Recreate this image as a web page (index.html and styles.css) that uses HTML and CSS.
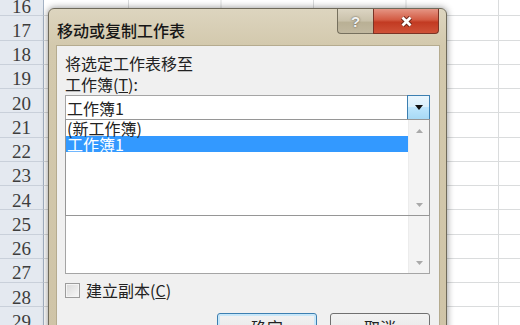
FILE: index.html
```html
<!DOCTYPE html>
<html lang="zh-CN">

<head>
    <meta charset="UTF-8">
    <meta name="viewport" content="width=device-width, initial-scale=1.0">
    <title>移动或复制工作表</title>
    <link rel="stylesheet" href="styles.css">
</head>

<body>
    <!-- 工作表背景 -->
    <div class="sheet">
        <div class="row"><div class="row-head">16</div><div class="cells"></div></div>
        <div class="row"><div class="row-head">17</div><div class="cells"></div></div>
        <div class="row"><div class="row-head">18</div><div class="cells"></div></div>
        <div class="row"><div class="row-head">19</div><div class="cells"></div></div>
        <div class="row"><div class="row-head">20</div><div class="cells"></div></div>
        <div class="row"><div class="row-head">21</div><div class="cells"></div></div>
        <div class="row"><div class="row-head">22</div><div class="cells"></div></div>
        <div class="row"><div class="row-head">23</div><div class="cells"></div></div>
        <div class="row"><div class="row-head">24</div><div class="cells"></div></div>
        <div class="row"><div class="row-head">25</div><div class="cells"></div></div>
        <div class="row"><div class="row-head">26</div><div class="cells"></div></div>
        <div class="row"><div class="row-head">27</div><div class="cells"></div></div>
        <div class="row"><div class="row-head">28</div><div class="cells"></div></div>
        <div class="row"><div class="row-head">29</div><div class="cells"></div></div>
    </div>

    <!-- 对话框 -->
    <div class="dialog">
        <div class="title-bar">
            <span class="title">移动或复制工作表</span>
            <div class="title-buttons">
                <span class="btn-help">?</span>
                <span class="btn-close">
                    <svg width="13" height="11" viewBox="0 0 13 11">
                        <path d="M2.5 1.5l8 8M10.5 1.5l-8 8" stroke="#6a2518" stroke-width="4.6" />
                        <path d="M2.5 1.5l8 8M10.5 1.5l-8 8" stroke="#fff" stroke-width="2.8" />
                    </svg>
                </span>
            </div>
        </div>

        <div class="client">
            <div class="label">将选定工作表移至</div>
            <div class="label">工作簿(<u>T</u>):</div>

            <div class="combo">
                <span class="combo-text">工作簿1</span>
                <span class="combo-arrow">
                    <svg width="8" height="5" viewBox="0 0 8 5"><path d="M0 0h8L4 5z" fill="#111" /></svg>
                </span>

                <!-- 下拉列表 -->
                <div class="dropdown">
                    <ul class="dropdown-items">
                        <li>(新工作簿)</li>
                        <li class="selected">工作簿1</li>
                    </ul>
                    <div class="scrollbar">
                        <span class="scroll-btn">
                            <svg width="7" height="4" viewBox="0 0 7 4"><path d="M0 4L3.5 0L7 4z" fill="#a9a9a9" /></svg>
                        </span>
                        <span class="scroll-btn">
                            <svg width="7" height="4" viewBox="0 0 7 4"><path d="M0 0L3.5 4L7 0z" fill="#a9a9a9" /></svg>
                        </span>
                    </div>
                </div>
            </div>

            <div class="listbox">
                <div class="listbox-items"></div>
                <div class="scrollbar">
                    <span class="scroll-btn">
                        <svg width="7" height="4" viewBox="0 0 7 4"><path d="M0 0L3.5 4L7 0z" fill="#a9a9a9" /></svg>
                    </span>
                </div>
            </div>

            <label class="check-row"><span class="checkbox"></span>建立副本(<u>C</u>)</label>

            <div class="buttons">
                <button class="btn default">确定</button>
                <button class="btn">取消</button>
            </div>
        </div>
    </div>
</body>

</html>
```

FILE: styles.css
```css
* {
    box-sizing: border-box;
}

body {
    margin: 0;
    width: 520px;
    height: 325px;
    overflow: hidden;
    position: relative;
    background-color: #fff;
    font-family: "Noto Sans CJK SC", "Liberation Sans", sans-serif;
}

/* 工作表 */
.sheet {
    margin-top: -8px;
}

.row {
    display: flex;
    height: 24.25px;
}

.row-head {
    flex: none;
    width: 44px;
    display: flex;
    justify-content: center;
    align-items: center;
    padding-top: 6px;
    background-color: #e4e9f0;
    border-right: 1px solid #a4b2c4;
    border-bottom: 1px solid #c9d0da;
    font-family: "Liberation Serif", serif;
    font-size: 19px;
    color: #3d3d3d;
}

.cells {
    flex: 1;
    border-bottom: 1px solid #dadcdd;
    background-image: linear-gradient(to right, #dadcdd 1px, transparent 1px);
    background-size: 92.5px 100%;
    background-position: 84px 0;
}

/* 对话框 */
.dialog {
    position: absolute;
    left: 48px;
    top: 8px;
    width: 399px;
    height: 340px;
    display: flex;
    flex-direction: column;
    border: 1px solid #6f6a5a;
    border-radius: 6px 6px 0 0;
    background: linear-gradient(#ddd5bf, #d3c9ad 36px, #cfc4a7);
    box-shadow: 0 0 7px rgba(0, 0, 0, 0.45);
}

.title-bar {
    flex: none;
    height: 36px;
    display: flex;
    justify-content: space-between;
    align-items: flex-start;
}

.title {
    padding: 11px 0 0 8px;
    font-size: 16px;
    font-weight: 500;
    line-height: 20px;
    color: #161616;
}

.title-buttons {
    display: flex;
    margin-right: 7px;
}

.btn-help,
.btn-close {
    height: 25px;
    display: flex;
    justify-content: center;
    align-items: center;
    border: 1px solid #76705e;
    border-top: none;
}

.btn-help {
    width: 36px;
    border-right: none;
    border-radius: 0 0 0 4px;
    background: linear-gradient(#dcd5c3, #c9c1aa 50%, #b9b095 55%, #c1b89f);
    font-family: "Liberation Sans", sans-serif;
    font-weight: bold;
    font-size: 15px;
    color: #f2f2f2;
    text-shadow: 0 0 2px #4f4a3e;
}

.btn-close {
    width: 66px;
    border-radius: 0 0 4px 0;
    border-color: #7a3426;
    background: linear-gradient(#e59584, #d35b43 45%, #c23a22 55%, #cf5238);
}

/* 客户区 */
.client {
    flex: 1;
    margin: 0 6px 0 7px;
    padding: 7px 9px 0 8px;
    display: flex;
    flex-direction: column;
    background-color: #f0f0f0;
    border: 1px solid #b5ab8f;
    border-bottom: none;
    font-size: 16px;
    color: #222;
}

.label {
    line-height: 21px;
}

.combo {
    position: relative;
    height: 25px;
    display: flex;
    justify-content: space-between;
    align-items: center;
    background-color: #fff;
    border: 1px solid #a5a5a5;
}

.combo-text {
    padding-left: 1px;
    line-height: 20px;
}

.combo-arrow {
    width: 23px;
    height: 25px;
    margin-right: -1px;
    display: flex;
    justify-content: center;
    align-items: center;
    border: 1px solid #3c7fb1;
    background: linear-gradient(#eaf6fd, #d9f0fc 50%, #bee6fd 50%, #a7d9f5);
}

.dropdown {
    position: absolute;
    top: 100%;
    left: -1px;
    width: calc(100% + 2px);
    height: 97px;
    display: flex;
    background-color: #fff;
    border: 1px solid #969696;
}

.dropdown-items {
    flex: 1;
    margin: 0;
    padding: 0;
    list-style: none;
}

.dropdown-items li {
    height: 16px;
    padding-left: 1px;
    line-height: 16px;
}

.dropdown-items .selected {
    background-color: #3399ff;
    color: #fff;
}

.scrollbar {
    flex: none;
    width: 21px;
    display: flex;
    flex-direction: column;
    justify-content: space-between;
    background-color: #f3f3f3;
    border-left: 1px solid #ececec;
}

.scroll-btn {
    height: 21px;
    display: flex;
    justify-content: center;
    align-items: center;
}

.listbox {
    height: 134px;
    margin-top: 20px;
    display: flex;
    background-color: #fff;
    border: 1px solid #a5a5a5;
}

.listbox-items {
    flex: 1;
}

.listbox .scrollbar {
    justify-content: flex-end;
}

.check-row {
    height: 16px;
    margin-top: 8px;
    display: flex;
    align-items: center;
    line-height: 16px;
}

.checkbox {
    width: 15px;
    height: 15px;
    margin-right: 6px;
    border: 1px solid #9c9c9c;
    background: linear-gradient(135deg, #d9d9d9, #f7f7f7);
    box-shadow: inset 0 0 0 1px #f4f4f4;
}

.buttons {
    margin-top: 15px;
    display: flex;
    justify-content: flex-end;
    gap: 13px;
}

.btn {
    width: 100px;
    height: 28px;
    padding: 0;
    border: 1px solid #707070;
    border-radius: 3px;
    background: linear-gradient(#f2f2f2, #ebebeb 50%, #dddddd 50%, #cfcfcf);
    font-family: inherit;
    font-size: 16px;
    line-height: 24px;
    color: #222;
}

.btn.default {
    border-color: #3c7fb1;
    box-shadow: inset 0 0 0 2px #c8e7f9;
}
```
